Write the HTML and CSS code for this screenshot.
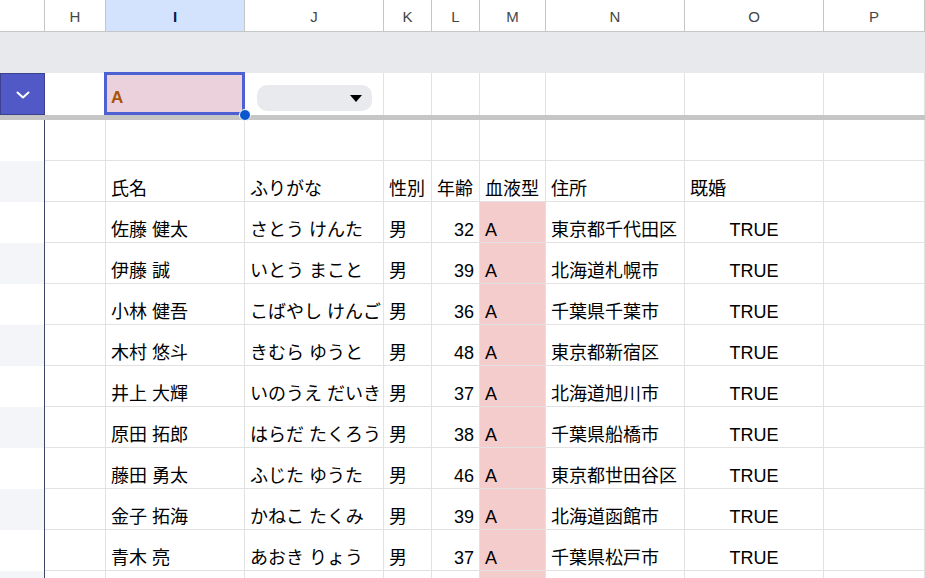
FILE: index.html
```html
<!DOCTYPE html>
<html lang="ja">
<head>
    <meta charset="UTF-8">
    <meta name="viewport" content="width=device-width, initial-scale=1.0">
    <title>血液型フィルタ</title>
    <link rel="stylesheet" href="styles.css">
</head>
<body>
    <div class="sheet">
        <!-- 列見出し -->
        <div class="cols col-head">
            <div class="ch corner"></div>
            <div class="ch">H</div>
            <div class="ch ch-active">I</div>
            <div class="ch">J</div>
            <div class="ch">K</div>
            <div class="ch">L</div>
            <div class="ch">M</div>
            <div class="ch">N</div>
            <div class="ch">O</div>
            <div class="ch">P</div>
        </div>

        <div class="band"></div>

        <!-- フィルタ行 -->
        <div class="cols filter-row">
            <div class="filter-toggle">
                <svg width="16" height="10" viewBox="0 0 16 10"><polyline points="2.5,2.5 8,7.5 13.5,2.5" fill="none" stroke="#fff" stroke-width="2" stroke-linecap="round" stroke-linejoin="round"/></svg>
            </div>
            <div class="fcell"></div>
            <div class="fcell selected">
                <span class="sel-value">A</span>
                <span class="handle"></span>
            </div>
            <div class="fcell">
                <div class="chip"><span class="caret"></span></div>
            </div>
            <div class="fcell"></div>
            <div class="fcell"></div>
            <div class="fcell"></div>
            <div class="fcell"></div>
            <div class="fcell"></div>
            <div class="fcell"></div>
        </div>

        <div class="freeze-bar"></div>

        <div class="cols row">
            <div class="rh"></div>
            <div class="cell"></div><div class="cell"></div><div class="cell"></div><div class="cell"></div>
            <div class="cell"></div><div class="cell"></div><div class="cell"></div><div class="cell"></div><div class="cell"></div>
        </div>

        <div class="cols row">
            <div class="rh shade"></div>
            <div class="cell"></div>
            <div class="cell">氏名</div>
            <div class="cell">ふりがな</div>
            <div class="cell">性別</div>
            <div class="cell">年齢</div>
            <div class="cell">血液型</div>
            <div class="cell">住所</div>
            <div class="cell">既婚</div>
            <div class="cell"></div>
        </div>

        <div class="cols row">
            <div class="rh"></div>
            <div class="cell"></div>
            <div class="cell">佐藤 健太</div>
            <div class="cell">さとう けんた</div>
            <div class="cell">男</div>
            <div class="cell num">32</div>
            <div class="cell blood">A</div>
            <div class="cell">東京都千代田区</div>
            <div class="cell center">TRUE</div>
            <div class="cell"></div>
        </div>

        <div class="cols row">
            <div class="rh shade"></div>
            <div class="cell"></div>
            <div class="cell">伊藤 誠</div>
            <div class="cell">いとう まこと</div>
            <div class="cell">男</div>
            <div class="cell num">39</div>
            <div class="cell blood">A</div>
            <div class="cell">北海道札幌市</div>
            <div class="cell center">TRUE</div>
            <div class="cell"></div>
        </div>

        <div class="cols row">
            <div class="rh"></div>
            <div class="cell"></div>
            <div class="cell">小林 健吾</div>
            <div class="cell">こばやし けんご</div>
            <div class="cell">男</div>
            <div class="cell num">36</div>
            <div class="cell blood">A</div>
            <div class="cell">千葉県千葉市</div>
            <div class="cell center">TRUE</div>
            <div class="cell"></div>
        </div>

        <div class="cols row">
            <div class="rh shade"></div>
            <div class="cell"></div>
            <div class="cell">木村 悠斗</div>
            <div class="cell">きむら ゆうと</div>
            <div class="cell">男</div>
            <div class="cell num">48</div>
            <div class="cell blood">A</div>
            <div class="cell">東京都新宿区</div>
            <div class="cell center">TRUE</div>
            <div class="cell"></div>
        </div>

        <div class="cols row">
            <div class="rh"></div>
            <div class="cell"></div>
            <div class="cell">井上 大輝</div>
            <div class="cell">いのうえ だいき</div>
            <div class="cell">男</div>
            <div class="cell num">37</div>
            <div class="cell blood">A</div>
            <div class="cell">北海道旭川市</div>
            <div class="cell center">TRUE</div>
            <div class="cell"></div>
        </div>

        <div class="cols row">
            <div class="rh shade"></div>
            <div class="cell"></div>
            <div class="cell">原田 拓郎</div>
            <div class="cell">はらだ たくろう</div>
            <div class="cell">男</div>
            <div class="cell num">38</div>
            <div class="cell blood">A</div>
            <div class="cell">千葉県船橋市</div>
            <div class="cell center">TRUE</div>
            <div class="cell"></div>
        </div>

        <div class="cols row">
            <div class="rh"></div>
            <div class="cell"></div>
            <div class="cell">藤田 勇太</div>
            <div class="cell">ふじた ゆうた</div>
            <div class="cell">男</div>
            <div class="cell num">46</div>
            <div class="cell blood">A</div>
            <div class="cell">東京都世田谷区</div>
            <div class="cell center">TRUE</div>
            <div class="cell"></div>
        </div>

        <div class="cols row">
            <div class="rh shade"></div>
            <div class="cell"></div>
            <div class="cell">金子 拓海</div>
            <div class="cell">かねこ たくみ</div>
            <div class="cell">男</div>
            <div class="cell num">39</div>
            <div class="cell blood">A</div>
            <div class="cell">北海道函館市</div>
            <div class="cell center">TRUE</div>
            <div class="cell"></div>
        </div>

        <div class="cols row">
            <div class="rh"></div>
            <div class="cell"></div>
            <div class="cell">青木 亮</div>
            <div class="cell">あおき りょう</div>
            <div class="cell">男</div>
            <div class="cell num">37</div>
            <div class="cell blood">A</div>
            <div class="cell">千葉県松戸市</div>
            <div class="cell center">TRUE</div>
            <div class="cell"></div>
        </div>

        <div class="cols row">
            <div class="rh shade"></div>
            <div class="cell"></div><div class="cell"></div><div class="cell"></div><div class="cell"></div>
            <div class="cell"></div><div class="cell blood"></div><div class="cell"></div><div class="cell"></div><div class="cell"></div>
        </div>
    </div>
</body>
</html>
```
FILE: styles.css
```css
:root {
    --grid: #e2e2e2;
    --head-line: #c4c7c5;
    --band: #e8e9ec;
    --blue: #4e61d3;
    --rojo-claro: #f4cccc;
}

* {
    margin: 0;
    padding: 0;
    box-sizing: border-box;
}

body {
    font-family: "Liberation Sans", "Noto Sans CJK JP", sans-serif;
    background-color: #fff;
    color: #000;
    overflow: hidden;
}

.sheet {
    width: 925px;
    height: 578px;
    overflow: hidden;
}

.cols {
    display: grid;
    grid-template-columns: 45px 61px 139px 139px 48px 48px 66px 139px 139px 101px;
}

/* cabecera de columnas */
.col-head {
    height: 32px;
}

.ch {
    display: flex;
    align-items: center;
    justify-content: center;
    font-size: 15px;
    color: #444746;
    border-right: 1px solid var(--head-line);
    border-bottom: 1px solid var(--head-line);
    padding-top: 1px;
}

.ch.corner {
    background-color: #fff;
}

.ch-active {
    background-color: #d3e3fd;
    color: #041e49;
    font-weight: bold;
}

.band {
    height: 41px;
    background-color: var(--band);
}

/* fila del filtro */
.filter-row {
    height: 42px;
}

.filter-toggle {
    background-color: #5059c6;
    border: 1px solid #3b418d;
    display: flex;
    align-items: center;
    justify-content: center;
    padding-top: 2px;
}

.fcell {
    border-right: 1px solid var(--grid);
    display: flex;
    align-items: flex-end;
    padding: 0 0 4px 0;
}

.fcell.selected {
    position: relative;
    background-color: #ead1dc;
    padding: 0 5px 6px;
    line-height: 22px;
}

.fcell.selected::after {
    content: '';
    position: absolute;
    top: -1px;
    left: -2px;
    right: -1px;
    bottom: 0;
    border: 3px solid var(--blue);
}

.sel-value {
    font-size: 17px;
    font-weight: bold;
    color: #a8530a;
}

.handle {
    position: absolute;
    right: -7px;
    bottom: -6px;
    width: 12px;
    height: 12px;
    border-radius: 50%;
    background-color: #0b57d0;
    border: 1px solid #fff;
    z-index: 2;
}

.chip {
    margin-left: 12px;
    width: 115px;
    height: 26px;
    border-radius: 10px;
    background-color: #e9eaed;
    display: flex;
    align-items: center;
    justify-content: flex-end;
    padding-right: 10px;
}

.caret {
    width: 0;
    height: 0;
    border-left: 6.5px solid transparent;
    border-right: 6.5px solid transparent;
    border-top: 7px solid #000;
}

.freeze-bar {
    height: 5px;
    background-color: #c6c6c6;
}

/* filas de datos */
.row {
    height: 41px;
}

.rh {
    background-color: #fff;
    border-right: 1px solid #3e4562;
}

.rh.shade {
    background-color: #f4f5f8;
}

.cell {
    display: flex;
    align-items: flex-end;
    padding: 0 5px 1px 5px;
    font-size: 18px;
    line-height: 22px;
    white-space: nowrap;
    overflow: hidden;
    border-right: 1px solid var(--grid);
    border-bottom: 1px solid var(--grid);
}

.cell.num {
    justify-content: flex-end;
}

.cell.center {
    justify-content: center;
}

.cell.blood {
    background-color: var(--rojo-claro);
}
```
